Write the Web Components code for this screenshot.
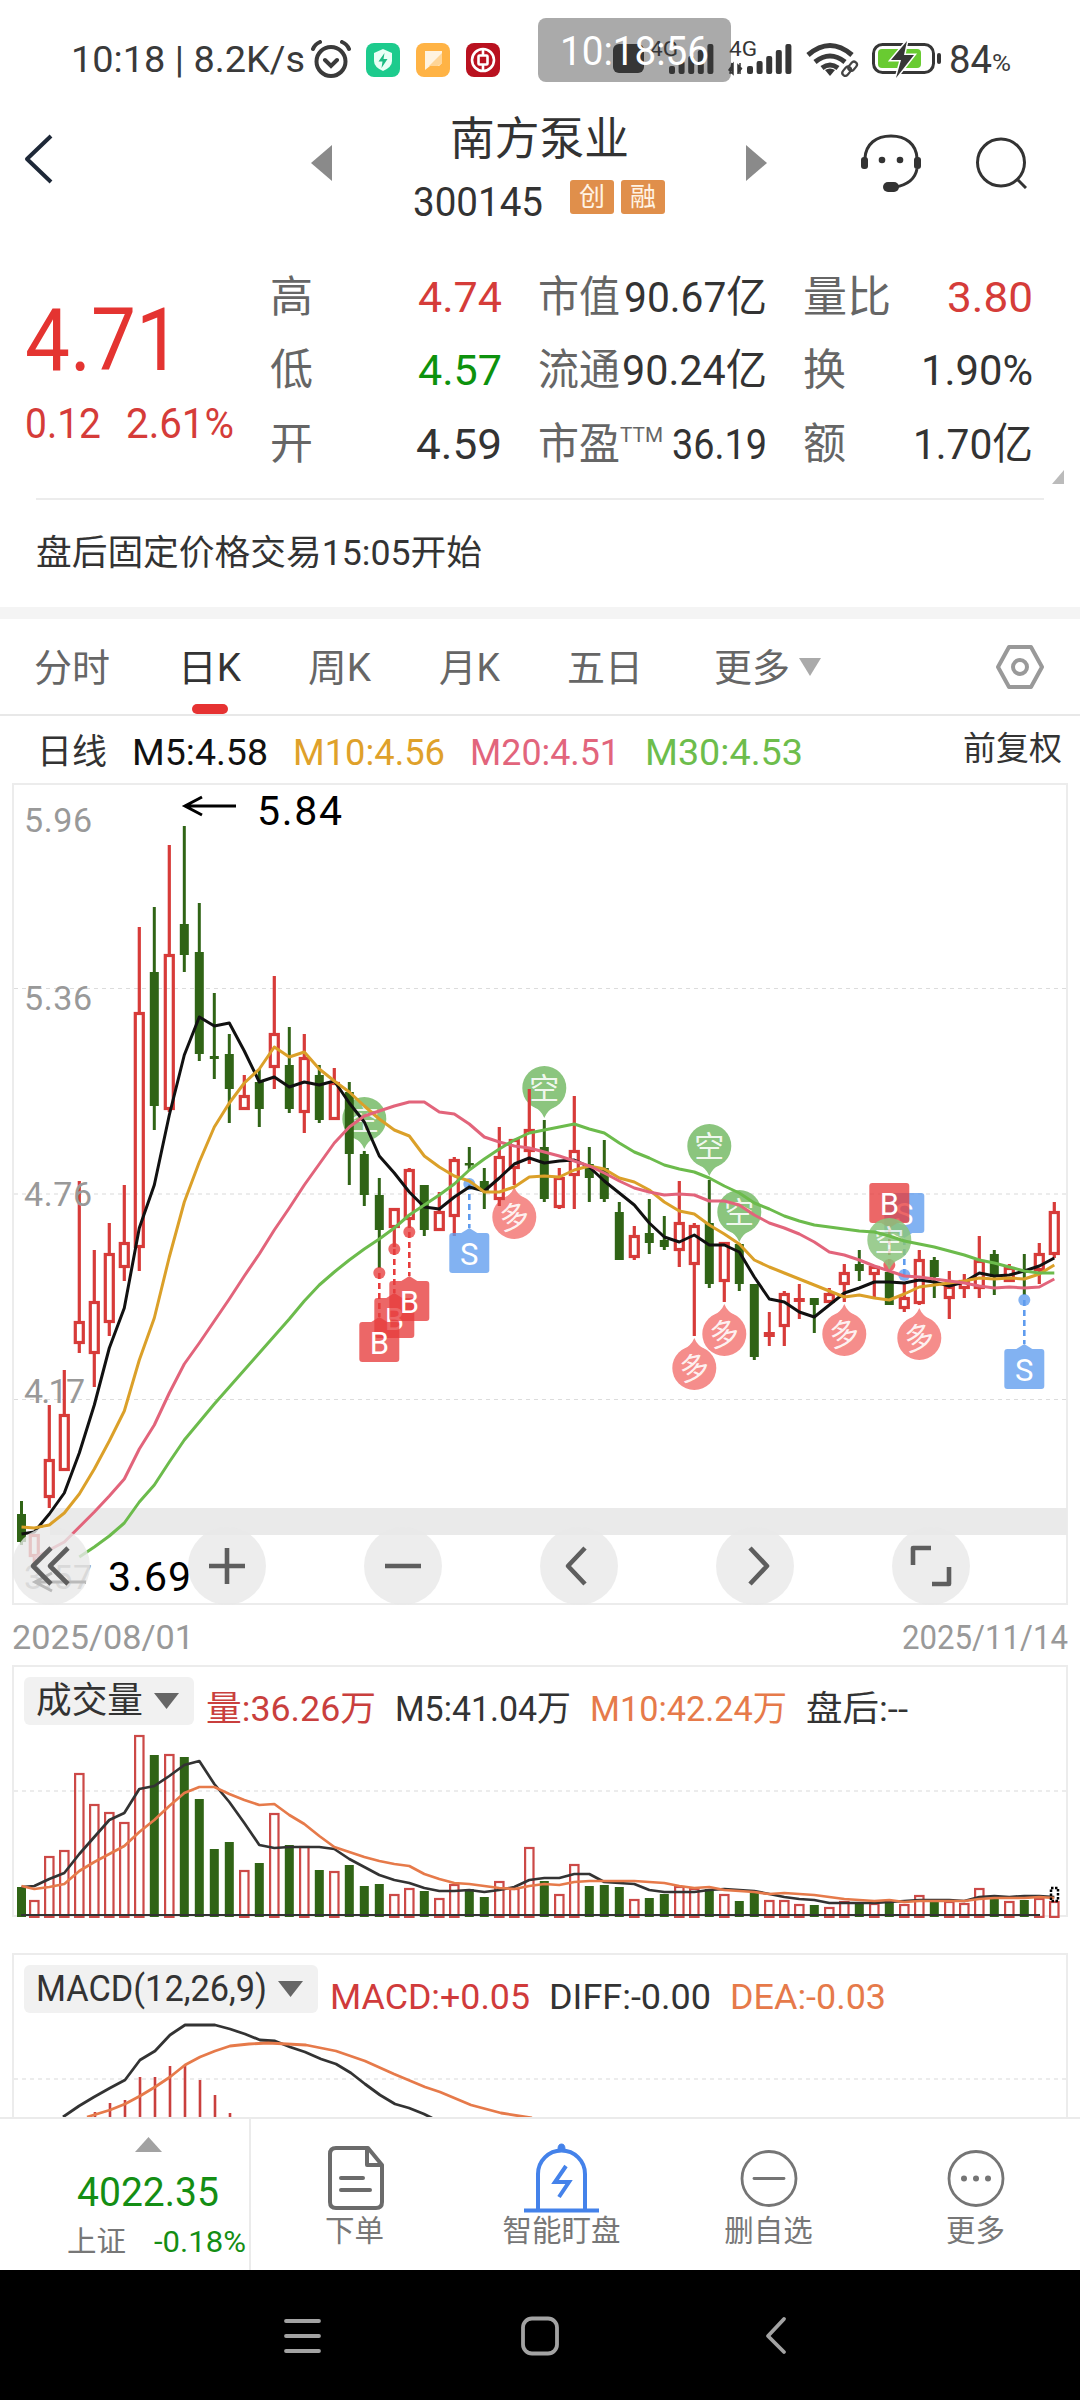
<!DOCTYPE html>
<html lang="zh-CN">
<head>
  <meta charset="UTF-8">
  <title>南方泵业 300145</title>
  <style>
    body {
      margin: 0;
      width: 1080px;
      height: 2400px;
      overflow: hidden;
      background: #fff;
      color: #333;
      font-family: Roboto, "Noto Sans CJK SC", sans-serif;
    }
  </style>
</head>
<body>
  <stock-app></stock-app>

  <script>
    class BaseElement extends HTMLElement {
      constructor() {
        super();
        this.attachShadow({ mode: 'open' });
      }

      getStyles() { return ''; }
      getMarkup() { return ''; }

      render() {
        const template = document.createElement('template');
        template.innerHTML = `<style>
          :host { display: block; }
          * { box-sizing: border-box; }
          svg { display: block; flex: none; }
          ${this.getStyles()}
        </style>${this.getMarkup()}`;
        this.shadowRoot.replaceChildren(template.content.cloneNode(true));
      }

      connectedCallback() {
        this.render();
      }
    }

    // One line of text squeezed or stretched to the width in "w"
    class FitText extends BaseElement {
      getStyles() {
        return `
          :host { display: inline-block; white-space: pre; flex: none; }
          span { display: inline-block; transform-origin: 0 50%; }
        `;
      }

      getMarkup() { return '<span><slot></slot></span>'; }

      connectedCallback() {
        super.connectedCallback();
        const w = Number(this.getAttribute('w'));
        const span = this.shadowRoot.querySelector('span');
        const size = this.getAttribute('size');
        if (size) this.style.fontSize = size + 'px';
        const natural = span.getBoundingClientRect().width;
        if (w && natural) {
          this.style.width = w + 'px';
          span.style.transform = `scaleX(${w / natural})`;
        }
      }
    }
    customElements.define('fit-text', FitText);

    class StatusBar extends BaseElement {
      getStyles() {
        return `
          :host { display: flex; align-items: center; height: 100px; padding: 20px 0 0 71px; line-height: 40px; position: relative; color: #3a3a3a; }
          .apps { display: flex; gap: 16px; margin-left: 14px; }
          .right { margin-left: 113px; position: relative; }
          .pct { margin-top: 5px; }
          .shade, .clock { position: absolute; left: 538px; top: 18px; width: 193px; height: 64px; border-radius: 8px; }
          .shade { background: #aaa; }
          .clock { display: flex; align-items: center; justify-content: center; padding-top: 3px; color: #fff; }
        `;
      }

      getMarkup() {
        const bars = (x) => [8, 13, 18, 24, 30].map((h, i) =>
          `<rect x="${x + i * 9.6}" y="${34 - h}" width="6" height="${h}" rx="2"/>`).join('');
        return `
          <fit-text size="37" w="234">10:18 | 8.2K/s</fit-text>
          <svg width="42" height="40" viewBox="0 0 42 40" style="margin-left:5px" fill="none" stroke="#3a3a3a" stroke-width="4" stroke-linecap="round">
            <circle cx="21" cy="21.5" r="14.5"/><path d="M3 9q2-5 7-7M39 9q-2-5-7-7M15 20l6 6 6-6"/>
          </svg>
          <div class="apps">
            <svg width="34" height="34" viewBox="0 0 34 34">
              <rect width="34" height="34" rx="8" fill="#1dcb8d"/>
              <path d="M17 6l9 4v8q0 6-9 10q-9-4-9-10v-8z" fill="#eafff6"/><path d="M18.500 10l-6 8.500h4l-1 6.500 6-9h-4z" fill="#1dbb83"/>
            </svg>
            <svg width="34" height="34" viewBox="0 0 34 34">
              <rect width="34" height="34" rx="8" fill="#ffb345"/><path d="M9 8h17v12l-3 3h-9l-5 4z" fill="#fff3e0"/><path d="M13 23l13-13v10l-4 3z" fill="#ffd596"/>
            </svg>
            <svg width="34" height="34" viewBox="0 0 34 34" fill="none" stroke="#fff">
              <rect width="34" height="34" rx="8" fill="#b9111f" stroke="none"/>
              <circle cx="17" cy="17" r="11" stroke-width="2.600"/><rect x="12.500" y="12.500" width="9" height="9" rx="1" stroke-width="2.600"/><path d="M17 6v7M17 21v7" stroke-width="2.600"/>
            </svg>
          </div>
          <div class="shade"></div>
          <svg class="right" width="330" height="40" viewBox="613 41 330 40" fill="#363636">
            <rect x="613" y="45" width="31" height="29" rx="6"/>
            <text x="650" y="57" font-size="20" textLength="28" lengthAdjust="spacingAndGlyphs">4G</text>
            <text x="729" y="57" font-size="20" textLength="28" lengthAdjust="spacingAndGlyphs">4G</text>
            <g transform="translate(0 41)">${bars(669)}${bars(747)}</g>
            <path d="M732 64v10h-2zM729 71l4 4v-10zM738 75v-9l4 4M740 64v11" stroke="#363636" stroke-width="1.500"/>
            <g fill="none" stroke="#3a3a3a" stroke-width="5">
              <path d="M808 56q22-19 44 0M815 63q15-12 30 0M822 69q8-6 16 0"/>
            </g>
            <path d="M825 71q5-3 10 0l-5 6z"/>
            <g fill="none" stroke="#fff" stroke-width="7"><path d="M843 73l9-9"/></g>
            <g fill="none" stroke="#444" stroke-width="2.200"><rect x="-3" y="-6" width="6" height="10" rx="3" transform="translate(846 73) rotate(40)"/><rect x="-3" y="-6" width="6" height="10" rx="3" transform="translate(852 68) rotate(40)"/></g>
            <rect x="873.500" y="45.500" width="60" height="28" rx="9" fill="#fff" stroke="#363636" stroke-width="3"/>
            <rect x="878" y="50" width="43" height="19" rx="4" fill="#69cb31"/>
            <rect x="937" y="54" width="4" height="11" rx="2"/>
            <path d="M907 42l-16 19h10l-5 18 18-23h-10z" stroke="#fff" stroke-width="3" paint-order="stroke"/>
          </svg>
          <fit-text size="38" w="43" style="margin-left:6px">84</fit-text>
          <fit-text class="pct" size="24" w="19">%</fit-text>
          <div class="clock"><fit-text size="40" w="149">10:18:56</fit-text></div>
        `;
      }
    }
    customElements.define('status-bar', StatusBar);

    class StockHeader extends BaseElement {
      getStyles() {
        return `
          :host { display: flex; align-items: center; height: 126px; padding-left: 24px; }
          .center { width: 414px; display: flex; flex-direction: column; align-items: center; gap: 12px; padding-top: 12px; }
          .title { line-height: 56px; margin-top: -2px; }
          .code { display: flex; align-items: center; gap: 27px; line-height: 44px; }
          .tags { display: flex; gap: 7px; margin-bottom: 10px; }
          .tags span { width: 44px; height: 34px; border-radius: 3px; background: #e08f4b; color: #fff3e4; font-size: 26px; line-height: 34px; text-align: center; }
        `;
      }

      getMarkup() {
        return `
          <svg width="30" height="50" viewBox="0 0 30 50" fill="none" stroke="#1e2838" stroke-width="4" style="margin-top:-9px"><path d="M27 2L3 25l24 23" stroke-linejoin="round"/></svg>
          <svg width="21" height="36" style="margin-left:257px"><path d="M21 0v36L0 18z" fill="#8a8a8a"/></svg>
          <div class="center">
            <fit-text class="title" size="45" w="179">南方泵业</fit-text>
            <div class="code">
              <fit-text size="41" w="130">300145</fit-text>
              <div class="tags"><span>创</span><span>融</span></div>
            </div>
          </div>
          <svg width="21" height="36"><path d="M0 0v36l21-18z" fill="#8a8a8a"/></svg>
          <svg width="62" height="60" viewBox="860 133 62 60" style="margin-left:93px" fill="none" stroke="#333" stroke-width="3">
            <path d="M865 158C866 144 876 136 891 136s25 8 26 22M917 169q-3 15-22 18"/>
            <rect x="861" y="157" width="7" height="12" rx="3" fill="#333" stroke="none"/><rect x="914" y="157" width="7" height="12" rx="3" fill="#333" stroke="none"/>
            <circle cx="882" cy="160" r="3.300" fill="#333" stroke="none"/><circle cx="900" cy="160" r="3.300" fill="#333" stroke="none"/>
            <rect x="883" y="182" width="16" height="10" rx="5" fill="#333" stroke="none"/>
          </svg>
          <svg width="52" height="52" viewBox="975 136 52 52" style="margin-left:53px" fill="none" stroke="#333" stroke-width="3"><circle cx="1001" cy="161.500" r="23.500"/><path d="M1017 178l9 9"/></svg>
        `;
      }
    }
    customElements.define('stock-header', StockHeader);

    class QuotePanel extends BaseElement {
      getStyles() {
        return `
          :host { display: grid; grid-template-columns: 209px 232px 229px 230px; column-gap: 36px; height: 273px; padding: 34px 0 0 25px; position: relative; color: #333; }
          .main { padding-top: 36px; color: #e43431; white-space: nowrap; }
          .price { line-height: 87px; display: block; }
          .change { display: flex; gap: 25px; margin-top: 18px; line-height: 45px; color: #d53c39; }
          .col { display: flex; flex-direction: column; }
          .row { display: flex; justify-content: space-between; align-items: center; height: 73.500px; line-height: 50px; }
          .row > :first-child { color: #666; }
          .red { color: #d53c39; }
          .green { color: #0d920d; }
          .label { display: flex; }
          sup { font-size: 21px; line-height: 30px; margin-top: 1px; }
          .corner { position: absolute; right: 16px; top: 244px; }
          .line { position: absolute; left: 36px; right: 36px; bottom: -1px; height: 2px; background: #ececec; }
        `;
      }

      getMarkup() {
        const row = (label, lw, value, vw, cls = '') => `
          <div class="row"><fit-text size="43" w="${lw}">${label}</fit-text><fit-text class="${cls}" size="43" w="${vw}">${value}</fit-text></div>`;
        return `
          <div class="main">
            <fit-text class="price" size="88" w="156">4.71</fit-text>
            <div class="change"><fit-text size="42" w="76">0.12</fit-text><fit-text size="42" w="108">2.61%</fit-text></div>
          </div>
          <div class="col">
            ${row('高', 43, '4.74', 84, 'red')}
            ${row('低', 43, '4.57', 84, 'green')}
            ${row('开', 43, '4.59', 86)}
          </div>
          <div class="col">
            ${row('市值', 82, '90.67亿', 143)}
            ${row('流通', 82, '90.24亿', 145)}
            <div class="row"><span class="label"><fit-text size="43" w="82">市盈</fit-text><sup><fit-text w="43">TTM</fit-text></sup></span><fit-text size="43" w="95">36.19</fit-text></div>
          </div>
          <div class="col">
            ${row('量比', 88, '3.80', 86, 'red')}
            ${row('换', 43, '1.90%', 112)}
            ${row('额', 43, '1.70亿', 120)}
          </div>
          <svg class="corner" width="12" height="14"><path d="M12 0v14H0z" fill="#bbb"/></svg>
          <div class="line"></div>
        `;
      }
    }
    customElements.define('quote-panel', QuotePanel);

    class PeriodTabs extends BaseElement {
      getStyles() {
        return `
          :host { display: flex; align-items: center; height: 97px; gap: 67.500px; padding: 0 35px 0 34px; border-bottom: 2px solid #e8e8e8; color: #666; }
          span, fit-text { line-height: 98px; height: 95px; position: relative; }
          .on { color: #333; }
          .on::after { content: ""; position: absolute; left: 14px; bottom: 0; width: 36px; height: 10px; border-radius: 5px; background: #e63232; }
          .more { display: flex; align-items: center; gap: 9px; margin-left: 3px; }
          .set { margin-left: auto; }
        `;
      }

      getMarkup() {
        return `
          <fit-text size="38" w="76">分时</fit-text>
          <fit-text size="38" w="63" class="on">日K</fit-text>
          <fit-text size="38" w="63">周K</fit-text>
          <fit-text size="38" w="61">月K</fit-text>
          <fit-text size="38" w="76">五日</fit-text>
          <span class="more"><fit-text size="38" w="76">更多</fit-text><svg width="22" height="18"><path d="M0 0h22L11 18z" fill="#aaa"/></svg></span>
          <svg class="set" width="50" height="46" viewBox="0 0 50 46" fill="none" stroke="#999" stroke-width="4" stroke-linejoin="round"><path d="M14 3h22l11 20-11 20H14L3 23z"/><circle cx="25" cy="23" r="7"/></svg>
        `;
      }
    }
    customElements.define('period-tabs', PeriodTabs);

    class MaLegend extends BaseElement {
      getStyles() {
        return `
          :host { display: flex; height: 67px; line-height: 74px; padding: 0 18px 0 37px; }
          fit-text { margin-right: 25px; }
          fit-text:first-child { margin-right: 20px; }
          fit-text:last-child { margin: -4px 0 0 auto; }
        `;
      }

      getMarkup() {
        return `
          <fit-text size="35" w="70">日线</fit-text>
          <fit-text size="36" w="136" style="color:#111">M5:4.58</fit-text>
          <fit-text size="36" w="152" style="color:#dfa12a">M10:4.56</fit-text>
          <fit-text size="36" w="150" style="color:#e2657c">M20:4.51</fit-text>
          <fit-text size="36" w="158" style="color:#6dbd4c">M30:4.53</fit-text>
          <fit-text size="33" w="99">前复权</fit-text>
        `;
      }
    }
    customElements.define('ma-legend', MaLegend);

    // Charts share one x scale: 70 days, 15px apart
    const xAt = (i) => i === 0 ? 21.5 : 19.3 + i * 15;
    const polyline = (ys, color, start = 0, width = 3) =>
      `<polyline points="${ys.map((y, i) => `${xAt(i + start)},${y}`).join(' ')}" fill="none" stroke="${color}" stroke-width="${width}" stroke-linejoin="round"/>`;

    const RED = '#d73b39';
    const GREEN = '#306416';

    // r = rise, g = fall, s = small filled rise; high, top, bottom, low
    const candles = `
      g1501,1514,1542,1545 r1534,1534,1557,1567 r1405,1459,1498,1508 r1370,1414,1471,1471 r1181,1321,1344,1353
      r1250,1301,1354,1387 r1223,1253,1323,1336 r1185,1242,1268,1281 r927,1012,1248,1271 g907,972,1106,1130
      r845,954,1110,1112 g826,924,955,972 g903,952,1054,1061 g993,1056,1059,1079 g1034,1054,1089,1123
      r1075,1095,1110,1110 g1069,1082,1109,1127 r976,1033,1068,1089 g1027,1065,1109,1113 r1034,1057,1113,1133
      g1065,1075,1120,1123 r1068,1082,1120,1120 g1082,1092,1154,1185 g1151,1154,1195,1206 g1178,1195,1230,1268
      r1208,1208,1228,1247 r1168,1169,1220,1228 g1185,1185,1230,1236 r1192,1211,1231,1231 r1157,1159,1217,1236
      g1147,1163,1165.5,1170 g1168,1181,1191,1209 r1127,1156,1200,1206 r1139,1139,1169,1185 r1089,1129,1152,1164
      g1120,1147,1199,1202 r1168,1177,1208,1209 r1096,1150,1176,1209 g1147,1164,1178,1202 g1140,1168,1199,1202
      g1202,1212,1260,1260 r1226,1235,1258,1260 g1199,1233,1243,1254 g1216,1240,1247,1250 r1181,1222,1251,1267
      r1223,1225,1265,1336 g1180,1223,1284,1288 r1242,1242,1282,1302 g1243,1244,1284,1291 g1284,1284,1357,1360
      s1312,1332,1337,1346 r1291,1293,1327,1346 s1284,1298,1302,1319 g1298,1298,1305,1333 r1288,1293,1303,1303
      r1264,1272,1285,1302 g1250,1264,1271,1281 r1266,1266,1275,1298 g1272,1272,1305,1305 r1284,1297,1309,1312
      r1250,1259,1304,1305 g1257,1260,1277,1298 r1271,1286,1299,1319 r1274,1280,1289,1298 r1236,1260,1289,1298
      g1250,1254,1277,1295 r1264,1267,1282,1282 g1254,1271,1273,1295 r1243,1253,1271,1284 r1202,1211,1255,1258
    `.trim().split(/\s+/).map(s => ({ type: s[0], v: s.slice(1).split(',').map(Number) }));

    const ma5 = [1534,1532,1514,1493,1453,1405,1348,1308,1228,1185,1115,1055,1017,1026,1023,1051,1082,1077,1087,1082,1085,1081,1103,1122,1156,1173,1192,1207,1209,1197,1187,1191,1178,1164,1158,1163,1161,1160,1167,1181,1193,1205,1223,1237,1242,1235,1245,1245,1252,1277,1299,1302,1312,1317,1305,1293,1288,1282,1282,1283,1280,1282,1286,1282,1273,1276,1275,1271,1266,1258];
    const ma10 = [1527,1528,1525,1513,1494,1469,1441,1411,1360,1318,1257,1202,1162,1127,1103,1083,1069,1047,1057,1052,1069,1081,1092,1106,1119,1130,1136,1156,1167,1176,1181,1192,1192,1187,1177,1176,1177,1170,1166,1169,1178,1182,1190,1202,1211,1214,1225,1234,1244,1260,1267,1273,1279,1285,1291,1297,1295,1298,1300,1294,1287,1285,1283,1281,1278,1279,1278,1279,1274,1265];
    const ma20 = [1558,1550,1542,1527,1512,1496,1479,1449,1425,1393,1364,1343,1321,1299,1276,1254,1230,1208,1185,1164,1143,1127,1116,1111,1106,1102,1102,1112,1114,1124,1137,1142,1146,1148,1152,1156,1161,1166,1173,1181,1188,1192,1195,1194,1195,1201,1201,1205,1215,1223,1228,1234,1242,1252,1255,1260,1266,1271,1276,1277,1279,1281,1283,1286,1288,1287,1288,1287,1279];
    const ma30 = [1557,1547,1536,1523,1502,1485,1462,1440,1422,1404,1387,1370,1353,1336,1319,1301,1285,1272,1260,1249,1239,1228,1215,1205,1195,1184,1170,1159,1149,1140,1133,1130,1127,1124,1129,1133,1143,1152,1158,1165,1169,1172,1178,1186,1193,1203,1209,1216,1221,1225,1227,1229,1231,1232,1236,1241,1244,1247,1251,1255,1260,1263,1267,1271,1273,1273];

    class KlineChart extends BaseElement {
      getStyles() {
        return `
          :host { display: grid; height: 823px; }
          svg.chart { grid-area: 1 / 1; }
          .tools { grid-area: 1 / 1; align-self: end; display: flex; gap: 98px; padding: 0 0 1px 12px; }
          .tools svg { width: 78px; height: 78px; border-radius: 50%; background: rgba(232, 232, 232, .8); fill: none; stroke: #5e5e5e; stroke-width: 4.6; stroke-linejoin: round; }
        `;
      }

      candle({ type, v: [high, top, bottom, low] }, i) {
        const x = xAt(i);
        const color = type === 'g' ? GREEN : RED;
        const h = bottom - top;
        if (type !== 'r') {
          const w = type === 's' ? 11 : 9;
          return `<path d="M${x} ${high}V${low}" stroke="${color}" stroke-width="3"/><rect x="${x - w / 2}" y="${top}" width="${w}" height="${h}" fill="${color}"/>`;
        }
        return `<path d="M${x} ${high}V${top}M${x} ${bottom}V${low}" stroke="${color}" stroke-width="3.2"/>
          <rect x="${x - 4}" y="${top + 1.5}" width="8" height="${h - 3}" fill="none" stroke="${color}" stroke-width="3.2"/>`;
      }

      pin(i, cy, up) {
        const x = xAt(i);
        const d = up ? -1 : 1;
        return `<g fill="${up ? '#f58d8b' : '#8bc57e'}">
          <circle cx="${x}" cy="${cy}" r="22"/><path d="M${x - 13} ${cy + d * 17}Q${x - 3} ${cy + d * 22} ${x} ${cy + d * 30}Q${x + 3} ${cy + d * 22} ${x + 13} ${cy + d * 17}z"/>
          <text x="${x}" y="${cy + 10.5}" font-size="30" text-anchor="middle" fill="#fff" fill-opacity=".9" ${up ? `transform="rotate(-12 ${x} ${cy})"` : ''}>${up ? '多' : '空'}</text></g>`;
      }

      trade(i, dot, top, label, above) {
        const x = xAt(i);
        const sell = label === 'S';
        const fill = sell ? '#5f9cee' : '#e73c3c';
        const edge = above ? top + 40 : top;
        const tip = above ? edge + 5 : edge - 5;
        return `<g fill="${fill}" fill-opacity=".78"><circle cx="${x}" cy="${dot}" r="6"/>
          <path d="M${x} ${dot}V${tip}" stroke="${fill}" stroke-width="2.6" stroke-dasharray="6 4"/>
          <path d="M${x - 8} ${edge}L${x} ${tip}L${x + 8} ${edge}z"/><rect x="${x - 20}" y="${top}" width="40" height="40" rx="3"/>
          <text x="${x}" y="${top + 31.5}" font-size="31" text-anchor="middle" fill="#fff" fill-opacity="1">${label}</text></g>`;
      }

      getMarkup() {
        const axis = [['5.96', 832], ['5.36', 1010], ['4.76', 1206], ['4.17', 1402.5], ['3.57', 1589]];
        const icons = [
          'M39 21L21 39l18 18M56 21L38 39l18 18',
          'M21 39h36M39 21v36',
          'M21 39h36',
          'M45 21L28 39l17 18',
          'M34 21l17 18-17 18',
          'M21 38V21h18M40 57h17V40'
        ];
        return `
          <svg class="chart" width="1080" height="823" viewBox="0 783 1080 823">
            <rect x="13" y="784" width="1054" height="820" fill="none" stroke="#ececec" stroke-width="2"/>
            <rect x="50" y="1508" width="1017" height="27" fill="#eaeaea"/>
            <path d="M14 988.500H1066M14 1399.500H1066" stroke="#dcdcdc" stroke-dasharray="4 4"/>
            <path d="M14 1194H1066" stroke="#ececec" stroke-width="2" stroke-dasharray="4 4"/>
            ${[[23, 1119], [35, 1088], [46, 1146], [48, 1212]].map(([i, y]) => this.pin(i, y, false)).join('')}
            ${[[33, 1217], [45, 1368], [47, 1334], [55, 1334], [60, 1338]].map(([i, y]) => this.pin(i, y, true)).join('')}
            ${candles.map((c, i) => this.candle(c, i)).join('')}
            ${this.trade(59, 1275, 1193, 'S', true)}
            ${this.trade(58, 1265, 1183, 'B', true)}
            <g opacity=".85">${this.pin(58, 1240, false)}</g>
            ${this.trade(25, 1249, 1298, 'B')}
            ${this.trade(26, 1232, 1281, 'B')}
            ${this.trade(24, 1273, 1322, 'B')}
            ${this.trade(30, 1184, 1233, 'S')}
            ${this.trade(67, 1300, 1349, 'S')}
            ${polyline(ma5, '#111')}
            ${polyline(ma10, '#dba029')}
            ${polyline(ma20, '#e2647b', 1)}
            ${polyline(ma30, '#6cbb4c', 4)}
            ${axis.map(([t, y]) => `<text x="24" y="${y}" font-size="34" fill="#999" textLength="${t === '4.17' ? 61 : 68}">${t}</text>`).join('')}
            <path d="M185 806h51M202 797l-17 9 17 9M35 1582h51M52 1573l-17 9 17 9" fill="none" stroke="#000" stroke-width="3"/>
            <text x="257" y="825" font-size="41" fill="#000" textLength="85">5.84</text>
            <text x="108" y="1591" font-size="41" fill="#000" textLength="83">3.69</text>
          </svg>
          <div class="tools">${icons.map(d => `<svg viewBox="0 0 78 78"><path d="${d}"/></svg>`).join('')}</div>
        `;
      }
    }
    customElements.define('kline-chart', KlineChart);

    class DateRange extends BaseElement {
      getStyles() {
        return ':host { display: flex; justify-content: space-between; height: 59px; padding: 0 12px; line-height: 62px; color: #999; }';
      }

      getMarkup() {
        return '<fit-text size="34" w="182">2025/08/01</fit-text><fit-text size="34" w="166">2025/11/14</fit-text>';
      }
    }
    customElements.define('date-range', DateRange);

    // Indicator selector and its values; the drawing goes in the slot
    class IndicatorPanel extends BaseElement {
      getStyles() {
        return `
          :host { display: grid; overflow: hidden; }
          ::slotted(svg) { grid-area: 1 / 1; display: block; }
          header { grid-area: 1 / 1; display: flex; align-items: flex-start; padding: 12px 0 0 24px; line-height: 48px; z-index: 1; }
          .pick { display: flex; align-items: center; gap: 11px; height: 48px; padding: 0 15px 0 12px; margin-right: 12px; border-radius: 6px; background: #f1f1f1; }
          .values { display: flex; gap: 19px; padding-top: 8.500px; }
        `;
      }

      getMarkup() {
        return `
          <header>
            <div class="pick"><fit-text size="36" w="${this.getAttribute('namew')}">${this.getAttribute('name')}</fit-text><svg width="25" height="16"><path d="M0 0h25L12.500 16z" fill="#666"/></svg></div>
            <div class="values"><slot name="values"></slot></div>
          </header>
          <slot></slot>
        `;
      }
    }
    customElements.define('indicator-panel', IndicatorPanel);

    const volume = [1887,1900,1856,1850,1773,1804,1812,1822,1735,1755,1754,1757,1799,1849,1842,1870,1863,1813,1845,1846,1870,1871,1865,1886,1884,1894,1888,1891,1898,1884,1889,1897,1881,1888,1847,1881,1894,1864,1886,1885,1887,1899,1898,1894,1886,1888,1889,1894,1901,1893,1900,1900,1904,1905,1907,1901,1902,1903,1901,1904,1895,1902,1901,1903,1888,1899,1901,1900,1898,1901];
    const vol5 = [1887,1886,1879,1873,1854,1837,1820,1813,1789,1786,1776,1765,1761,1784,1802,1823,1845,1848,1847,1847,1847,1849,1859,1867,1875,1880,1883,1888,1891,1891,1890,1892,1890,1887,1880,1878,1878,1874,1874,1882,1883,1884,1890,1892,1892,1892,1890,1889,1890,1891,1894,1897,1899,1900,1903,1903,1903,1903,1902,1901,1900,1900,1900,1901,1897,1896,1897,1896,1896,1897];
    const vol10 = [1886,1889,1887,1884,1871,1862,1854,1846,1832,1820,1806,1793,1787,1787,1794,1800,1805,1804,1815,1824,1836,1847,1852,1857,1861,1864,1866,1874,1879,1883,1884,1886,1888,1889,1886,1884,1885,1882,1881,1881,1881,1881,1882,1883,1886,1888,1887,1890,1891,1892,1894,1893,1894,1895,1897,1899,1900,1901,1900,1902,1901,1901,1901,1901,1899,1898,1898,1898,1897,1898];

    class VolumeChart extends BaseElement {
      getMarkup() {
        const bars = volume.map((y, i) => candles[i].type === 'g'
          ? `<rect x="${xAt(i) - 4.5}" y="${y}" width="9" height="${1917 - y}" fill="${GREEN}"/>`
          : `<rect x="${xAt(i) - 4.2}" y="${y + 1}" width="8.400" height="${1916 - y}" fill="none" stroke="#cc4947" stroke-width="2.200"/>`).join('');
        return `
          <indicator-panel name="成交量" namew="107">
            <fit-text slot="values" size="35" w="170" style="color:#c93f3d">量:36.26万</fit-text>
            <fit-text slot="values" size="35" w="176">M5:41.04万</fit-text>
            <fit-text slot="values" size="35" w="197" style="color:#e67a4a">M10:42.24万</fit-text>
            <fit-text slot="values" size="35" w="102">盘后:--</fit-text>
            <svg width="1080" height="253" viewBox="0 1665 1080 253">
              <rect x="13" y="1666" width="1054" height="250" fill="none" stroke="#ececec" stroke-width="2"/>
              <path d="M14 1791H1066" stroke="#ececec" stroke-width="2" stroke-dasharray="4 4"/>
              ${bars}
              <path d="M21 1915H1040" stroke="#333" stroke-width="2.200"/>
              ${polyline(vol5, '#333', 0, 2.7)}
              ${polyline(vol10, '#e67a4a', 0, 2.7)}
              <rect x="1051" y="1888" width="7" height="13" fill="none" stroke="#000" stroke-width="2.500" stroke-dasharray="2.500 1.500"/>
            </svg>
          </indicator-panel>
        `;
      }
    }
    customElements.define('volume-chart', VolumeChart);

    class MacdChart extends BaseElement {
      getStyles() {
        return ':host { margin-top: 35px; height: 164px; overflow: hidden; }';
      }

      getMarkup() {
        const bars = [2112, 2103, 2100, 2077, 2077, 2066, 2065, 2080, 2095, 2113];
        return `
          <indicator-panel name="MACD(12,26,9)" namew="231">
            <fit-text slot="values" size="35" w="200" style="color:#d03b3b">MACD:+0.05</fit-text>
            <fit-text slot="values" size="35" w="162">DIFF:-0.00</fit-text>
            <fit-text slot="values" size="35" w="156" style="color:#e67a4a">DEA:-0.03</fit-text>
            <svg width="1080" height="164" viewBox="0 1953 1080 164">
              <path d="M13 2120V1954H1067V2120" fill="none" stroke="#ececec" stroke-width="2"/>
              <path d="M14 2079H1066" stroke="#ececec" stroke-width="2" stroke-dasharray="4 4"/>
              <path d="${bars.map((y, i) => `M${95 + i * 15} ${y}V2120`).join('')}" stroke="#c93f3d" stroke-width="2.600"/>
              <g fill="none" stroke-width="2.800" stroke-linejoin="round">
                <polyline stroke="#333" points="63,2117 79,2106 94,2097 110,2088 125,2080 140,2060 155,2051 170,2035 185,2025 215,2025 230,2029 245,2034 260,2040 275,2041 290,2047 305,2052 321,2059 336,2064 351,2073 365,2084 380,2095 395,2104 409,2108 424,2114 432,2118"/>
                <polyline stroke="#e67a4a" points="87,2117 110,2110 125,2104 140,2096 155,2087 170,2077 185,2065 200,2057 215,2051 230,2046 249,2044 268,2043 287,2044 306,2045 336,2051 365,2061 394,2074 425,2087 440,2092 471,2105 501,2113 532,2118"/>
              </g>
            </svg>
          </indicator-panel>
        `;
      }
    }
    customElements.define('macd-chart', MacdChart);

    class NavItem extends BaseElement {
      getStyles() {
        return `
          :host { width: 207px; display: flex; flex-direction: column; align-items: center; padding-top: 24px; color: #777; font-size: 29.500px; line-height: 36px; }
          ::slotted(svg) { display: block; }
        `;
      }

      getMarkup() { return '<slot name="icon"></slot><span><slot></slot></span>'; }
    }
    customElements.define('nav-item', NavItem);

    class BottomNav extends BaseElement {
      getStyles() {
        return `
          :host { display: flex; height: 153px; border-top: 2px solid #ebebeb; background: #fff; }
          .index { width: 251px; border-right: 2px solid #ebebeb; padding-top: 18px; color: #148e14; }
          .index > svg { margin: 0 auto 0 135px; }
          .num { display: block; margin: 15px 0 0 77px; line-height: 50px; }
          .sub { display: flex; gap: 28px; padding-left: 67px; line-height: 42px; margin-top: 4px; }
          .name { color: #777; }
        `;
      }

      getMarkup() {
        return `
          <div class="index">
            <svg width="27" height="15"><path d="M13.500 0L27 15H0z" fill="#a2a2a2"/></svg>
            <fit-text class="num" size="41" w="142">4022.35</fit-text>
            <div class="sub"><fit-text class="name" size="29" w="59">上证</fit-text><fit-text size="30" w="92">-0.18%</fit-text></div>
          </div>
          <nav-item>
            <svg slot="icon" width="76" height="70" viewBox="317 2143 76 70" fill="none" stroke="#6b6b6b" stroke-width="4" stroke-linecap="round" stroke-linejoin="round"><path d="M336 2148h32l14 17v37q0 6-6 6h-40q-6 0-6-6v-48q0-6 6-6zM367 2150v15h14M341 2178h22M341 2190h29"/></svg>
            下单
          </nav-item>
          <nav-item>
            <svg slot="icon" width="76" height="70" viewBox="525 2143 76 70" fill="none" stroke="#4482ea" stroke-width="4"><path d="M539 2210v-36a23.500 23.500 0 0 1 47 0v36M525 2210.500h75M567 2166l-11 16h14l-10 15" /><path d="M559 2149q0-5 3.500-5t3.500 5z" fill="#4482ea" stroke-width="1"/></svg>
            智能盯盘
          </nav-item>
          <nav-item>
            <svg slot="icon" width="76" height="70" viewBox="0 0 76 70" fill="none" stroke="#757575" stroke-width="2.800" stroke-linecap="round"><circle cx="38" cy="35.500" r="27"/><path d="M23 35.500h30"/></svg>
            删自选
          </nav-item>
          <nav-item>
            <svg slot="icon" width="76" height="70" viewBox="0 0 76 70" fill="#757575"><circle cx="38" cy="35.500" r="27" fill="none" stroke="#757575" stroke-width="2.800"/><circle cx="26" cy="35.500" r="3"/><circle cx="38" cy="35.500" r="3"/><circle cx="50" cy="35.500" r="3"/></svg>
            更多
          </nav-item>
        `;
      }
    }
    customElements.define('bottom-nav', BottomNav);

    class SystemNav extends BaseElement {
      getStyles() {
        return ':host { display: flex; align-items: center; gap: 196px; height: 130px; padding-left: 282px; background: #000; }';
      }

      getMarkup() {
        const open = '<svg width="41" height="41" viewBox="0 0 41 41" fill="none" stroke="#a3a3a3" stroke-width="3.800" stroke-linecap="round" stroke-linejoin="round">';
        return `
          ${open}<path d="M4 6h33M4 21h33M4 36h33"/></svg>
          ${open}<rect x="4" y="3.500" width="34" height="35" rx="9"/></svg>
          ${open}<path d="M28 4L12 21l16 16"/></svg>
        `;
      }
    }
    customElements.define('system-nav', SystemNav);

    class StockApp extends BaseElement {
      getStyles() {
        return `
          .notice { height: 108px; padding-left: 36px; line-height: 109px; }
          .band { height: 12px; background: #f4f4f4; }
        `;
      }

      getMarkup() {
        return `
          <status-bar></status-bar>
          <stock-header></stock-header>
          <quote-panel></quote-panel>
          <div class="notice"><fit-text size="35" w="446">盘后固定价格交易15:05开始</fit-text></div>
          <div class="band"></div>
          <period-tabs></period-tabs>
          <ma-legend></ma-legend>
          <kline-chart></kline-chart>
          <date-range></date-range>
          <volume-chart></volume-chart>
          <macd-chart></macd-chart>
          <bottom-nav></bottom-nav>
          <system-nav></system-nav>
        `;
      }
    }
    customElements.define('stock-app', StockApp);
  </script>
</body>
</html>
